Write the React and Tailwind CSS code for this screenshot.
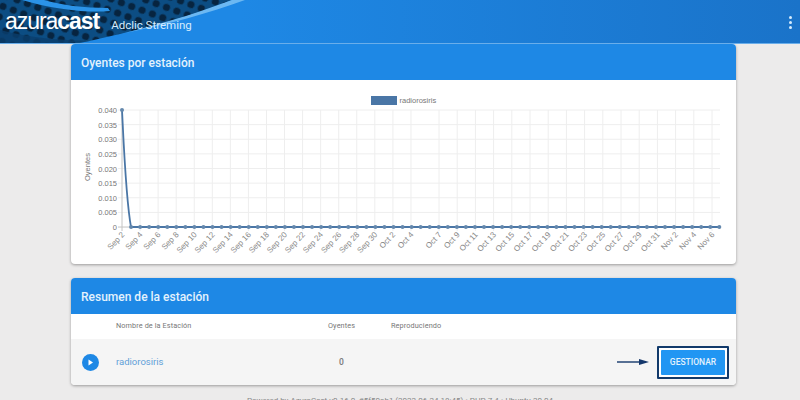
import React from 'react';

const ticks = [];
const labels = [
  'Sep 2', 'Sep 4', 'Sep 6', 'Sep 8', 'Sep 10', 'Sep 12', 'Sep 14', 'Sep 16', 'Sep 18', 'Sep 20', 'Sep 22', 'Sep 24', 'Sep 26', 'Sep 28', 'Sep 30', 'Oct 2', 'Oct 4',
];
labels.forEach((l, i) => ticks.push({ x: 122 + i * 18.06, l }));
const labels2 = [
  'Oct 7', 'Oct 9', 'Oct 11', 'Oct 13', 'Oct 15', 'Oct 17', 'Oct 19', 'Oct 21', 'Oct 23', 'Oct 25', 'Oct 27', 'Oct 29', 'Oct 31', 'Nov 2', 'Nov 4', 'Nov 6',
];
labels2.forEach((l, i) => ticks.push({ x: 439 + i * 18.2, l }));

const yLabels = ['0.040', '0.035', '0.030', '0.025', '0.020', '0.015', '0.010', '0.005', '0'];
const points = Array.from({ length: 67 }, (_, i) => 122 + i * 9.05);

const Chart = () => (
  <svg width="665" height="184" viewBox="71 80 665 184" className="block" style={{ fontFamily: '"Liberation Sans", sans-serif' }}>
    <rect x="371" y="96" width="26" height="9" fill="#4a76a6" />
    <text x="399.5" y="103" fontSize="7.5" fill="#777">radiorosiris</text>
    <text transform="translate(90 167) rotate(-90)" fontSize="7.5" fill="#777" textAnchor="middle">Oyentes</text>

    {yLabels.map((l, i) => {
      const y = 110 + i * 14.63;
      return (
        <g key={l}>
          <line x1="118" x2="720" y1={y} y2={y} stroke={i === 8 ? '#c4c4c4' : '#eeeeee'} strokeWidth="1" />
          <text x="117" y={y + 3} fontSize="7.5" fill="#777" textAnchor="end">{l}</text>
        </g>
      );
    })}

    {ticks.map((t, i) => (
      <g key={t.l}>
        <line x1={t.x} x2={t.x} y1="110" y2="231" stroke={i === 0 ? '#c4c4c4' : '#eeeeee'} strokeWidth="1" />
        <text transform={`translate(${t.x + 3} 235) rotate(-47)`} fontSize="8" fill="#888" textAnchor="end">{t.l}</text>
      </g>
    ))}

    <path d="M122 110 C124 150 126 200 131 227 L720 227" fill="none" stroke="#4a76a6" strokeWidth="1.8" />
    {points.map((x, i) => (
      <circle key={i} cx={x} cy={i === 0 ? 110 : 227} r="2" fill="#6488ad" />
    ))}
  </svg>
);

const HeaderArt = () => (
  <svg width="340" height="43" viewBox="0 0 340 43" className="block">
    <defs>
      <pattern id="dots" width="11" height="11" patternUnits="userSpaceOnUse" patternTransform="rotate(20)">
        <rect width="11" height="11" fill="#0c4d83" />
        <circle cx="5" cy="5" r="3.6" fill="#07243f" />
      </pattern>
    </defs>
    <path d="M0 0 H232 C190 18 130 32 80 43 L0 43 Z" fill="url(#dots)" />
    <path d="M0 30 C30 38 60 40 90 41 L70 43 H0 Z" fill="#0a3f6e" opacity="0.8" />
    <path d="M22 0 C55 10 90 13 110 11 L108 8 C85 8 60 5 44 0 Z" fill="#2b93e8" />
    <path d="M232 0 C205 10 170 22 125 33 C165 25 210 13 245 0 Z" fill="#6cb8f2" />
  </svg>
);

const CardHeader = ({ children }) => (
  <div className="h-9 flex items-center pt-[2px] px-[10px] bg-[#1e88e5] text-[#e3f2fd] text-[12px] font-medium rounded-t-sm">
    {children}
  </div>
);

export default function App() {
  return (
    <div className="w-[800px] h-[400px] overflow-hidden bg-[#ecebeb] flex flex-col" style={{ fontFamily: 'Roboto, sans-serif' }}>
      <header className="relative h-[44px] shrink-0 bg-[#1e88e5] border-b border-[#6aaeea] flex items-center overflow-hidden">
        <div className="absolute inset-0">
          <HeaderArt />
        </div>
        <div className="absolute right-0 top-0 h-full w-[560px] bg-gradient-to-r from-transparent to-[#1a73c9]" />
        <div className="relative flex items-baseline pl-[5px] pt-[2px] w-full">
          <span className="text-white text-[23px] leading-none tracking-[-1.05px]" style={{ fontFamily: '"Liberation Sans", sans-serif' }}>
            azura<span className="font-bold">cast</span>
          </span>
          <span className="ml-[12px] text-[#d6ecfd] text-[11.5px]">Adclic Streming</span>
          <span className="ml-auto mr-[8px] self-center flex flex-col gap-[2px]">
            <i className="block w-[3px] h-[3px] rounded-full bg-[#d6ecfd]" />
            <i className="block w-[3px] h-[3px] rounded-full bg-[#d6ecfd]" />
            <i className="block w-[3px] h-[3px] rounded-full bg-[#d6ecfd]" />
          </span>
        </div>
      </header>

      <main className="w-[665px] ml-[71px] flex flex-col gap-[14px] shrink-0">
        <section className="bg-white rounded-sm shadow-[0_1px_3px_rgba(0,0,0,0.35)]">
          <CardHeader>Oyentes por estación</CardHeader>
          <Chart />
        </section>

        <section className="bg-white rounded-sm shadow-[0_1px_3px_rgba(0,0,0,0.35)]">
          <CardHeader>Resumen de la estación</CardHeader>
          <div className="h-[25px] flex items-center text-[7.3px] text-[#777] tracking-[0.1px]">
            <span className="ml-[45px] w-[212px]">Nombre de la Estación</span>
            <span className="w-[63px]">Oyentes</span>
            <span>Reproduciendo</span>
          </div>
          <div className="h-[46px] bg-[#f5f5f5] flex items-center rounded-b-sm">
            <span className="ml-[11px] w-[17px] h-[17px] rounded-full bg-[#1e88e5] flex items-center justify-center">
              <svg width="7" height="7" viewBox="0 0 7 7"><path d="M1.5 0.5 L6 3.5 L1.5 6.5 Z" fill="#fff" /></svg>
            </span>
            <span className="ml-[17px] w-[223px] text-[9.5px] text-[#5f9fd8]">radiorosiris</span>
            <span className="text-[8.5px] font-medium text-[#777]">0</span>
            <svg width="32" height="8" viewBox="0 0 32 8" className="ml-auto mr-[8px]">
              <path d="M0 4 H26" stroke="#14376b" strokeWidth="1.4" />
              <path d="M22 1 L32 4 L22 7 Z" fill="#14376b" />
            </svg>
            <button className="w-[72px] h-[33px] mr-[7px] border-2 border-[#123a6b] bg-white p-[2px] rounded-[1px]">
              <span className="flex w-full h-full items-center justify-center bg-[#2196f3] text-[#e3f2fd] text-[8.5px] font-medium rounded-[1px]">
                GESTIONAR
              </span>
            </button>
          </div>
        </section>
      </main>

      <footer className="mt-[10px] text-center text-[8px] text-[#888] whitespace-nowrap">
        Powered by AzuraCast v0.16.0, #5f50ab1 (2022-06-24 18:45) • PHP 7.4 • Ubuntu 20.04
      </footer>
    </div>
  );
}
